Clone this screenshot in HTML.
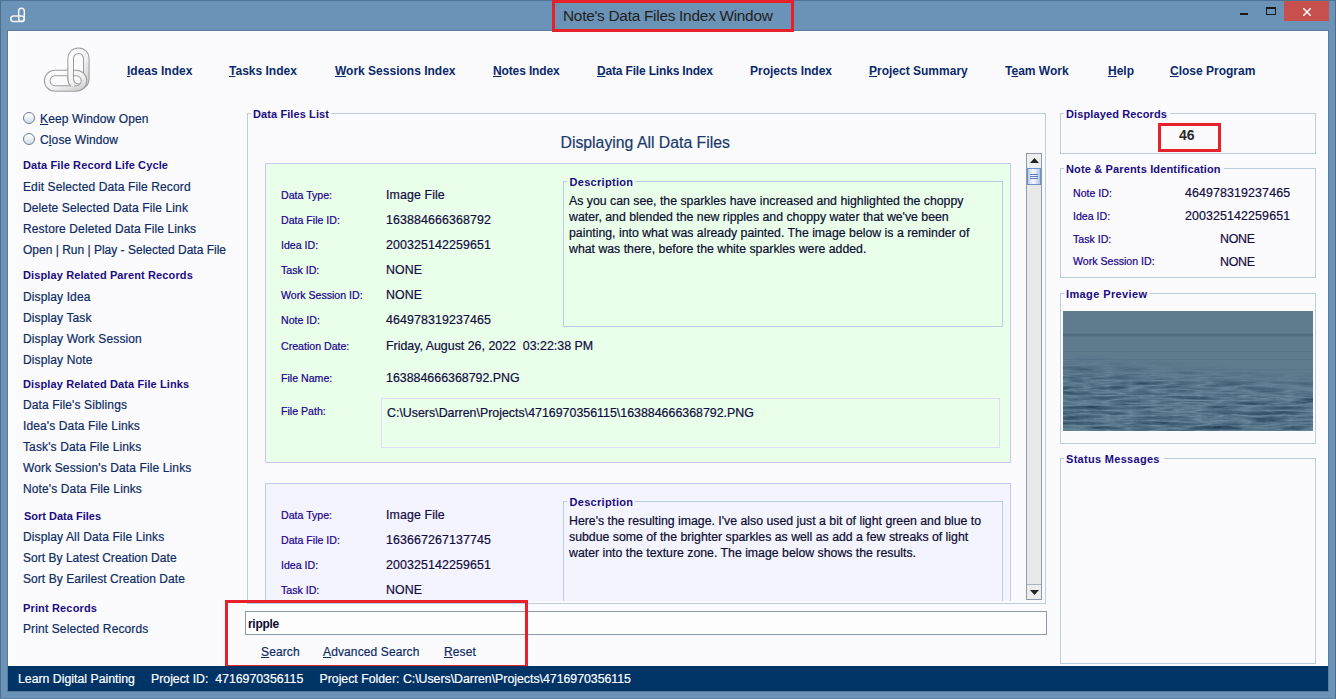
<!DOCTYPE html>
<html><head><meta charset="utf-8"><style>
html,body{margin:0;padding:0;width:1336px;height:699px;overflow:hidden;background:#6b93b8}
body{position:relative;font-family:"Liberation Sans",sans-serif}
.t{position:absolute;white-space:pre;font-family:"Liberation Sans",sans-serif}
.l{letter-spacing:0.12px}
.t{-webkit-text-stroke:0.2px currentColor}
u{text-decoration:underline;text-underline-offset:1px}
</style></head><body>
<div style="position:absolute;left:0px;top:0px;width:1336px;height:699px;background:#6b93b8"></div>
<div style="position:absolute;left:0px;top:0px;width:1336px;height:1px;background:#4e7394"></div>
<div style="position:absolute;left:0px;top:0px;width:1px;height:699px;background:#4f6f8d"></div>
<div style="position:absolute;left:1335px;top:0px;width:1px;height:699px;background:#4d6c89"></div>
<div style="position:absolute;left:0px;top:698px;width:1336px;height:1px;background:#5b81a3"></div>
<div style="position:absolute;left:7px;top:30px;width:1322px;height:662px;background:#587b9b"></div>
<div style="position:absolute;left:8px;top:31px;width:1320px;height:660px;background:#fbfbfd;border:1px solid #fff;box-sizing:border-box"></div>
<div class="t " style="left:563px;top:7.96px;font-size:15.4px;line-height:15.4px;font-weight:400;color:#221f1a;-webkit-text-stroke:0;letter-spacing:-0.27px">Note's Data Files Index Window</div>
<div style="position:absolute;left:552px;top:0px;width:242px;height:32px;border:3px solid #e8202a;box-sizing:border-box"></div>
<div style="position:absolute;left:1240px;top:13px;width:8px;height:2px;background:#1a1a1a"></div>
<div style="position:absolute;left:1266px;top:7px;width:10px;height:8px;border:1px solid #1a1a1a;border-top-width:2px;box-sizing:border-box"></div>
<div style="position:absolute;left:1284px;top:1px;width:45px;height:20px;background:#c7504e"></div>
<svg style="position:absolute;left:1303px;top:8px" width="8" height="8" viewBox="0 0 8 8"><path d="M0.3 0.3 L7.7 7.7 M7.7 0.3 L0.3 7.7" stroke="#fff" stroke-width="1.5"/></svg>
<svg style="position:absolute;left:9px;top:7px" width="18" height="16" viewBox="0 0 18 16"><rect x="9.7" y="1.2" width="5.6" height="13.4" rx="2.8" fill="none" stroke="#f4f4f4" stroke-width="1.5"/><rect x="1.8" y="9" width="13.5" height="5.6" rx="2.8" fill="none" stroke="#f4f4f4" stroke-width="1.5"/></svg>
<svg style="position:absolute;left:40px;top:44px" width="52" height="52" viewBox="0 0 52 52">
<defs><linearGradient id="lg" x1="0" y1="0" x2="1" y2="1"><stop offset="0" stop-color="#ffffff"/><stop offset="0.6" stop-color="#f0f0f0"/><stop offset="1" stop-color="#cfcfcf"/></linearGradient>
<clipPath id="cf"><rect x="25" y="24" width="9.5" height="18"/></clipPath></defs>
<g id="vl"><rect x="30.7" y="6.7" width="15.6" height="36" rx="7.8" fill="none" stroke="#9c9c9c" stroke-width="6.6"/>
<rect x="30.7" y="6.7" width="15.6" height="36" rx="7.8" fill="none" stroke="url(#lg)" stroke-width="4.6"/></g>
<rect x="7.2" y="29" width="36.8" height="15.5" rx="7.75" fill="none" stroke="#9c9c9c" stroke-width="6.6"/>
<rect x="7.2" y="29" width="36.8" height="15.5" rx="7.75" fill="none" stroke="url(#lg)" stroke-width="4.6"/>
<g clip-path="url(#cf)"><rect x="30.7" y="6.7" width="15.6" height="36" rx="7.8" fill="none" stroke="#9c9c9c" stroke-width="6.6"/>
<rect x="30.7" y="6.7" width="15.6" height="36" rx="7.8" fill="none" stroke="url(#lg)" stroke-width="4.6"/></g>
</svg>
<div class="t " style="left:127px;top:64.84px;font-size:12px;line-height:12px;font-weight:700;color:#0a2a6a;-webkit-text-stroke:0;"><u>I</u>deas Index</div>
<div class="t " style="left:229px;top:64.84px;font-size:12px;line-height:12px;font-weight:700;color:#0a2a6a;-webkit-text-stroke:0;"><u>T</u>asks Index</div>
<div class="t " style="left:335px;top:64.84px;font-size:12px;line-height:12px;font-weight:700;color:#0a2a6a;-webkit-text-stroke:0;"><u>W</u>ork Sessions Index</div>
<div class="t " style="left:493px;top:64.84px;font-size:12px;line-height:12px;font-weight:700;color:#0a2a6a;-webkit-text-stroke:0;letter-spacing:-0.13px"><u>N</u>otes Index</div>
<div class="t " style="left:597px;top:64.84px;font-size:12px;line-height:12px;font-weight:700;color:#0a2a6a;-webkit-text-stroke:0;letter-spacing:-0.17px"><u>D</u>ata File Links Index</div>
<div class="t " style="left:750px;top:64.84px;font-size:12px;line-height:12px;font-weight:700;color:#0a2a6a;-webkit-text-stroke:0;">Projects Index</div>
<div class="t " style="left:869px;top:64.84px;font-size:12px;line-height:12px;font-weight:700;color:#0a2a6a;-webkit-text-stroke:0;"><u>P</u>roject Summary</div>

<div class="t " style="left:1005px;top:64.84px;font-size:12px;line-height:12px;font-weight:700;color:#0a2a6a;-webkit-text-stroke:0;">T<u>e</u>am Work</div>
<div class="t " style="left:1108px;top:64.84px;font-size:12px;line-height:12px;font-weight:700;color:#0a2a6a;-webkit-text-stroke:0;"><u>H</u>elp</div>
<div class="t " style="left:1170px;top:64.84px;font-size:12px;line-height:12px;font-weight:700;color:#0a2a6a;-webkit-text-stroke:0;"><u>C</u>lose Program</div>
<div style="position:absolute;left:23px;top:112px;width:12px;height:12px;border-radius:50%;border:1px solid #6e7d8b;box-sizing:border-box;background:linear-gradient(#fbfcfd 20%,#e6edf4 55%,#cfdcea)"></div>
<div style="position:absolute;left:23px;top:133px;width:12px;height:12px;border-radius:50%;border:1px solid #6e7d8b;box-sizing:border-box;background:linear-gradient(#fbfcfd 20%,#e6edf4 55%,#cfdcea)"></div>
<div class="t l" style="left:40px;top:112.84px;font-size:12px;line-height:12px;font-weight:400;color:#0d2b63;"><u>K</u>eep Window Open</div>
<div class="t l" style="left:40px;top:134.34px;font-size:12px;line-height:12px;font-weight:400;color:#0d2b63;">C<u>l</u>ose Window</div>
<div class="t " style="left:23px;top:159.69px;font-size:11px;line-height:11px;font-weight:700;color:#1a0c82;-webkit-text-stroke:0;letter-spacing:0.12px">Data File Record Life Cycle</div>
<div class="t l" style="left:23px;top:180.84px;font-size:12px;line-height:12px;font-weight:400;color:#0d2b63;">Edit Selected Data File Record</div>
<div class="t l" style="left:23px;top:201.84px;font-size:12px;line-height:12px;font-weight:400;color:#0d2b63;">Delete Selected Data File Link</div>
<div class="t l" style="left:23px;top:222.84px;font-size:12px;line-height:12px;font-weight:400;color:#0d2b63;">Restore Deleted Data File Links</div>
<div class="t " style="left:23px;top:243.84px;font-size:12px;line-height:12px;font-weight:400;color:#0d2b63;">Open | Run | Play - Selected Data File</div>
<div class="t " style="left:23px;top:269.69px;font-size:11px;line-height:11px;font-weight:700;color:#1a0c82;-webkit-text-stroke:0;letter-spacing:0.12px">Display Related Parent Records</div>
<div class="t l" style="left:23px;top:290.84px;font-size:12px;line-height:12px;font-weight:400;color:#0d2b63;">Display Idea</div>
<div class="t l" style="left:23px;top:311.84px;font-size:12px;line-height:12px;font-weight:400;color:#0d2b63;">Display Task</div>
<div class="t l" style="left:23px;top:332.84px;font-size:12px;line-height:12px;font-weight:400;color:#0d2b63;">Display Work Session</div>
<div class="t l" style="left:23px;top:353.84px;font-size:12px;line-height:12px;font-weight:400;color:#0d2b63;">Display Note</div>
<div class="t " style="left:23px;top:378.69px;font-size:11px;line-height:11px;font-weight:700;color:#1a0c82;-webkit-text-stroke:0;letter-spacing:0.12px">Display Related Data File Links</div>
<div class="t l" style="left:23px;top:398.84px;font-size:12px;line-height:12px;font-weight:400;color:#0d2b63;">Data File's Siblings</div>
<div class="t l" style="left:23px;top:419.84px;font-size:12px;line-height:12px;font-weight:400;color:#0d2b63;">Idea's Data File Links</div>
<div class="t l" style="left:23px;top:440.84px;font-size:12px;line-height:12px;font-weight:400;color:#0d2b63;">Task's Data File Links</div>
<div class="t l" style="left:23px;top:461.84px;font-size:12px;line-height:12px;font-weight:400;color:#0d2b63;">Work Session's Data File Links</div>
<div class="t l" style="left:23px;top:482.84px;font-size:12px;line-height:12px;font-weight:400;color:#0d2b63;">Note's Data File Links</div>
<div class="t " style="left:24px;top:510.69px;font-size:11px;line-height:11px;font-weight:700;color:#1a0c82;-webkit-text-stroke:0;">Sort Data Files</div>
<div class="t " style="left:23px;top:530.84px;font-size:12px;line-height:12px;font-weight:400;color:#0d2b63;letter-spacing:0.12px">Display All Data File Links</div>
<div class="t " style="left:23px;top:551.84px;font-size:12px;line-height:12px;font-weight:400;color:#0d2b63;letter-spacing:0.03px">Sort By Latest Creation Date</div>
<div class="t " style="left:23px;top:572.84px;font-size:12px;line-height:12px;font-weight:400;color:#0d2b63;letter-spacing:0.06px">Sort By Earilest Creation Date</div>
<div class="t " style="left:23px;top:602.69px;font-size:11px;line-height:11px;font-weight:700;color:#1a0c82;-webkit-text-stroke:0;letter-spacing:0.15px">Print Records</div>
<div class="t l" style="left:23px;top:623.34px;font-size:12px;line-height:12px;font-weight:400;color:#0d2b63;">Print Selected Records</div>
<div style="position:absolute;left:247px;top:113px;width:799px;height:491px;border:1px solid #b9cde3;box-sizing:border-box"></div>
<div style="position:absolute;left:251px;top:106px;width:80px;height:12px;background:#fbfbfd"></div>
<div class="t " style="left:253px;top:108.69px;font-size:11px;line-height:11px;font-weight:700;color:#1a0c82;-webkit-text-stroke:0;letter-spacing:0.1px">Data Files List</div>
<div class="t " style="left:560.5px;top:135.22px;font-size:15.8px;line-height:15.8px;font-weight:400;color:#183a6c;">Displaying All Data Files</div>
<div style="position:absolute;left:248px;top:154px;width:777px;height:447px;overflow:hidden">
<div style="position:absolute;left:17px;top:9px;width:746px;height:300px;background:#eaffea;border:1px solid #c6c6f4;box-sizing:border-box"></div>
<div class="t " style="left:33px;top:35.52px;font-size:10.6px;line-height:10.6px;font-weight:400;color:#18008a;">Data Type:</div>
<div class="t " style="left:138px;top:35.00px;font-size:12.4px;line-height:12.4px;font-weight:400;color:#120c40;letter-spacing:0.1px">Image File</div>
<div class="t " style="left:33px;top:60.52px;font-size:10.6px;line-height:10.6px;font-weight:400;color:#18008a;">Data File ID:</div>
<div class="t " style="left:138px;top:60.00px;font-size:12.4px;line-height:12.4px;font-weight:400;color:#120c40;letter-spacing:0.1px">163884666368792</div>
<div class="t " style="left:33px;top:85.52px;font-size:10.6px;line-height:10.6px;font-weight:400;color:#18008a;">Idea ID:</div>
<div class="t " style="left:138px;top:85.00px;font-size:12.4px;line-height:12.4px;font-weight:400;color:#120c40;letter-spacing:0.1px">200325142259651</div>
<div class="t " style="left:33px;top:110.52px;font-size:10.6px;line-height:10.6px;font-weight:400;color:#18008a;">Task ID:</div>
<div class="t " style="left:138px;top:110.00px;font-size:12.4px;line-height:12.4px;font-weight:400;color:#120c40;letter-spacing:0.1px">NONE</div>
<div class="t " style="left:33px;top:135.52px;font-size:10.6px;line-height:10.6px;font-weight:400;color:#18008a;">Work Session ID:</div>
<div class="t " style="left:138px;top:135.00px;font-size:12.4px;line-height:12.4px;font-weight:400;color:#120c40;letter-spacing:0.1px">NONE</div>
<div class="t " style="left:33px;top:160.52px;font-size:10.6px;line-height:10.6px;font-weight:400;color:#18008a;">Note ID:</div>
<div class="t " style="left:138px;top:160.00px;font-size:12.4px;line-height:12.4px;font-weight:400;color:#120c40;letter-spacing:0.1px">464978319237465</div>
<div style="position:absolute;left:315px;top:27px;width:440px;height:146px;border:1px solid #b9cde3;box-sizing:border-box"></div>
<div style="position:absolute;left:319px;top:21px;width:68px;height:12px;background:#eaffea"></div>
<div class="t " style="left:321.5px;top:22.69px;font-size:11px;line-height:11px;font-weight:700;color:#1a0c82;-webkit-text-stroke:0;letter-spacing:0.3px">Description</div>
<div class="t " style="left:321px;top:41.09px;font-size:12.3px;line-height:12.3px;font-weight:400;color:#0c0c30;">As you can see, the sparkles have increased and highlighted the choppy</div>
<div class="t " style="left:321px;top:57.09px;font-size:12.3px;line-height:12.3px;font-weight:400;color:#0c0c30;">water, and blended the new ripples and choppy water that we've been</div>
<div class="t " style="left:321px;top:73.09px;font-size:12.3px;line-height:12.3px;font-weight:400;color:#0c0c30;">painting, into what was already painted. The image below is a reminder of</div>
<div class="t " style="left:321px;top:89.09px;font-size:12.3px;line-height:12.3px;font-weight:400;color:#0c0c30;">what was there, before the white sparkles were added.</div>
<div class="t " style="left:33px;top:187.02px;font-size:10.6px;line-height:10.6px;font-weight:400;color:#18008a;">Creation Date:</div>
<div class="t " style="left:138px;top:186.00px;font-size:12.4px;line-height:12.4px;font-weight:400;color:#120c40;">Friday, August 26, 2022 &nbsp;03:22:38 PM</div>
<div class="t " style="left:33px;top:218.72px;font-size:10.6px;line-height:10.6px;font-weight:400;color:#18008a;">File Name:</div>
<div class="t " style="left:138px;top:218.20px;font-size:12.4px;line-height:12.4px;font-weight:400;color:#120c40;">163884666368792.PNG</div>
<div class="t " style="left:33px;top:252.32px;font-size:10.6px;line-height:10.6px;font-weight:400;color:#18008a;">File Path:</div>
<div style="position:absolute;left:133px;top:244px;width:619px;height:50px;border:1px solid #dedcf8;box-sizing:border-box"></div>
<div class="t " style="left:139px;top:253.00px;font-size:12.4px;line-height:12.4px;font-weight:400;color:#120c40;">C:\Users\Darren\Projects\4716970356115\163884666368792.PNG</div>
<div style="position:absolute;left:17px;top:329px;width:746px;height:300px;background:#f4f4fe;border:1px solid #c6c6f4;box-sizing:border-box"></div>
<div class="t " style="left:33px;top:355.52px;font-size:10.6px;line-height:10.6px;font-weight:400;color:#18008a;">Data Type:</div>
<div class="t " style="left:138px;top:355.00px;font-size:12.4px;line-height:12.4px;font-weight:400;color:#120c40;letter-spacing:0.1px">Image File</div>
<div class="t " style="left:33px;top:380.52px;font-size:10.6px;line-height:10.6px;font-weight:400;color:#18008a;">Data File ID:</div>
<div class="t " style="left:138px;top:380.00px;font-size:12.4px;line-height:12.4px;font-weight:400;color:#120c40;letter-spacing:0.1px">163667267137745</div>
<div class="t " style="left:33px;top:405.52px;font-size:10.6px;line-height:10.6px;font-weight:400;color:#18008a;">Idea ID:</div>
<div class="t " style="left:138px;top:405.00px;font-size:12.4px;line-height:12.4px;font-weight:400;color:#120c40;letter-spacing:0.1px">200325142259651</div>
<div class="t " style="left:33px;top:430.52px;font-size:10.6px;line-height:10.6px;font-weight:400;color:#18008a;">Task ID:</div>
<div class="t " style="left:138px;top:430.00px;font-size:12.4px;line-height:12.4px;font-weight:400;color:#120c40;letter-spacing:0.1px">NONE</div>
<div class="t " style="left:33px;top:455.52px;font-size:10.6px;line-height:10.6px;font-weight:400;color:#18008a;">Work Session ID:</div>
<div class="t " style="left:138px;top:455.00px;font-size:12.4px;line-height:12.4px;font-weight:400;color:#120c40;letter-spacing:0.1px">NONE</div>
<div class="t " style="left:33px;top:480.52px;font-size:10.6px;line-height:10.6px;font-weight:400;color:#18008a;">Note ID:</div>
<div class="t " style="left:138px;top:480.00px;font-size:12.4px;line-height:12.4px;font-weight:400;color:#120c40;letter-spacing:0.1px">464978319237465</div>
<div style="position:absolute;left:315px;top:347px;width:440px;height:146px;border:1px solid #b9cde3;box-sizing:border-box"></div>
<div style="position:absolute;left:319px;top:341px;width:68px;height:12px;background:#f4f4fe"></div>
<div class="t " style="left:321.5px;top:342.69px;font-size:11px;line-height:11px;font-weight:700;color:#1a0c82;-webkit-text-stroke:0;letter-spacing:0.3px">Description</div>
<div class="t " style="left:321px;top:361.09px;font-size:12.3px;line-height:12.3px;font-weight:400;color:#0c0c30;">Here's the resulting image. I've also used just a bit of light green and blue to</div>
<div class="t " style="left:321px;top:377.09px;font-size:12.3px;line-height:12.3px;font-weight:400;color:#0c0c30;">subdue some of the brighter sparkles as well as add a few streaks of light</div>
<div class="t " style="left:321px;top:393.09px;font-size:12.3px;line-height:12.3px;font-weight:400;color:#0c0c30;">water into the texture zone. The image below shows the results.</div>
</div>
<div style="position:absolute;left:1026px;top:153px;width:16px;height:447px;background:#e9e9e9;border:1px solid #8c9cae;box-sizing:border-box"></div>
<div style="position:absolute;left:1027px;top:154px;width:14px;height:14px;background:#ededed"></div>
<svg style="position:absolute;left:1030px;top:158px" width="9" height="5"><path d="M0 5 L4.5 0 L9 5 Z" fill="#222"/></svg>
<div style="position:absolute;left:1027px;top:168px;width:14px;height:17px;border:1px solid #6d8fc8;box-sizing:border-box;background:linear-gradient(90deg,#b9cdee,#f4f8fe 40%,#e6eefa 60%,#a9c0e6)"></div>
<div style="position:absolute;left:1030px;top:174px;width:8px;height:1px;background:#5a7fc0"></div>
<div style="position:absolute;left:1030px;top:176px;width:8px;height:1px;background:#5a7fc0"></div>
<div style="position:absolute;left:1030px;top:178px;width:8px;height:1px;background:#5a7fc0"></div>
<div style="position:absolute;left:1027px;top:584px;width:14px;height:1px;background:#a9b3bd"></div>
<div style="position:absolute;left:1027px;top:585px;width:14px;height:14px;background:#ededed"></div>
<svg style="position:absolute;left:1030px;top:590px" width="9" height="5"><path d="M0 0 L4.5 5 L9 0 Z" fill="#222"/></svg>
<div style="position:absolute;left:245px;top:611px;width:802px;height:24px;background:#fdfdfe;border:1px solid #8d9aa6;box-sizing:border-box"></div>
<div class="t " style="left:248px;top:617.84px;font-size:12px;line-height:12px;font-weight:700;color:#0d0a2e;-webkit-text-stroke:0;letter-spacing:-0.3px">ripple</div>
<div class="t l" style="left:261px;top:645.84px;font-size:12px;line-height:12px;font-weight:400;color:#0d2b63;"><u>S</u>earch</div>
<div class="t l" style="left:323px;top:645.84px;font-size:12px;line-height:12px;font-weight:400;color:#0d2b63;"><u>A</u>dvanced Search</div>
<div class="t l" style="left:444px;top:645.84px;font-size:12px;line-height:12px;font-weight:400;color:#0d2b63;"><u>R</u>eset</div>
<div style="position:absolute;left:225px;top:600px;width:303px;height:68px;border:3px solid #e8202a;box-sizing:border-box"></div>
<div style="position:absolute;left:1060px;top:113px;width:256px;height:41px;border:1px solid #b9cde3;box-sizing:border-box"></div>
<div style="position:absolute;left:1064px;top:107px;width:106px;height:12px;background:#fbfbfd"></div>
<div class="t " style="left:1066px;top:108.69px;font-size:11px;line-height:11px;font-weight:700;color:#1a0c82;-webkit-text-stroke:0;letter-spacing:0.12px">Displayed Records</div>
<div style="position:absolute;left:1158px;top:123px;width:63px;height:29px;border:3px solid #e8202a;box-sizing:border-box"></div>
<div class="t " style="left:1179px;top:128.15px;font-size:14px;line-height:14px;font-weight:700;color:#2a2a2a;-webkit-text-stroke:0;">46</div>
<div style="position:absolute;left:1060px;top:168px;width:256px;height:110px;border:1px solid #b9cde3;box-sizing:border-box"></div>
<div style="position:absolute;left:1064px;top:162px;width:160px;height:12px;background:#fbfbfd"></div>
<div class="t " style="left:1066px;top:163.69px;font-size:11px;line-height:11px;font-weight:700;color:#1a0c82;-webkit-text-stroke:0;letter-spacing:0.15px">Note &amp; Parents Identification</div>
<div class="t " style="left:1073px;top:187.72px;font-size:10.6px;line-height:10.6px;font-weight:400;color:#18008a;">Note ID:</div>
<div class="t " style="left:1185px;top:187.20px;font-size:12.4px;line-height:12.4px;font-weight:400;color:#120c40;letter-spacing:0.12px">464978319237465</div>
<div class="t " style="left:1073px;top:210.62px;font-size:10.6px;line-height:10.6px;font-weight:400;color:#18008a;">Idea ID:</div>
<div class="t " style="left:1185px;top:210.10px;font-size:12.4px;line-height:12.4px;font-weight:400;color:#120c40;letter-spacing:0.12px">200325142259651</div>
<div class="t " style="left:1073px;top:233.52px;font-size:10.6px;line-height:10.6px;font-weight:400;color:#18008a;">Task ID:</div>
<div class="t " style="left:1220px;top:233.00px;font-size:12.4px;line-height:12.4px;font-weight:400;color:#120c40;letter-spacing:-0.3px">NONE</div>
<div class="t " style="left:1073px;top:256.42px;font-size:10.6px;line-height:10.6px;font-weight:400;color:#18008a;">Work Session ID:</div>
<div class="t " style="left:1220px;top:255.90px;font-size:12.4px;line-height:12.4px;font-weight:400;color:#120c40;letter-spacing:-0.3px">NONE</div>
<div style="position:absolute;left:1060px;top:293px;width:256px;height:151px;border:1px solid #b9cde3;box-sizing:border-box"></div>
<div style="position:absolute;left:1064px;top:287px;width:86px;height:12px;background:#fbfbfd"></div>
<div class="t " style="left:1066px;top:288.69px;font-size:11px;line-height:11px;font-weight:700;color:#1a0c82;-webkit-text-stroke:0;letter-spacing:0.39px">Image Preview</div>
<svg style="position:absolute;left:1063px;top:311px" width="250" height="120" viewBox="0 0 250 120">
<defs>
<filter id="wt" x="0" y="0" width="100%" height="100%" color-interpolation-filters="sRGB"><feTurbulence type="turbulence" baseFrequency="0.022 0.2" numOctaves="4" seed="11"/>
<feColorMatrix type="matrix" values="0 0 0 -0.36 0.43  0 0 0 -0.38 0.555  0 0 0 -0.34 0.625  0 0 0 0 1"/></filter>
<linearGradient id="wm" x1="0.15" y1="0" x2="0" y2="1"><stop offset="0" stop-color="#fff" stop-opacity="0"/><stop offset="0.36" stop-color="#fff" stop-opacity="0"/><stop offset="0.6" stop-color="#fff" stop-opacity="0.9"/><stop offset="1" stop-color="#fff" stop-opacity="1"/></linearGradient>
<mask id="wmask"><rect width="250" height="120" fill="url(#wm)"/></mask>
</defs>
<rect width="250" height="120" fill="#5f7b8e"/>
<rect y="22" width="250" height="1" fill="#5a7588"/><rect y="23" width="250" height="2" fill="#526c80"/><rect y="25" width="250" height="1" fill="#5a7589"/>
<rect y="40" width="250" height="1" fill="#58748a"/>
<rect y="48" width="250" height="1" fill="#58748a"/>
<rect y="58" width="250" height="1" fill="#5a768b"/>
<rect width="250" height="120" filter="url(#wt)" mask="url(#wmask)"/>
</svg>
<div style="position:absolute;left:1060px;top:458px;width:256px;height:206px;border:1px solid #b9cde3;box-sizing:border-box"></div>
<div style="position:absolute;left:1064px;top:452px;width:100px;height:12px;background:#fbfbfd"></div>
<div class="t " style="left:1066px;top:453.69px;font-size:11px;line-height:11px;font-weight:700;color:#1a0c82;-webkit-text-stroke:0;letter-spacing:0.3px">Status Messages</div>
<div style="position:absolute;left:8px;top:666px;width:1320px;height:25px;background:#003366"></div>
<div class="t " style="left:18px;top:672.59px;font-size:12.3px;line-height:12.3px;font-weight:400;color:#fff;">Learn Digital Painting</div>
<div class="t " style="left:151px;top:672.59px;font-size:12.3px;line-height:12.3px;font-weight:400;color:#fff;">Project ID: &nbsp;4716970356115</div>
<div class="t " style="left:319.5px;top:672.59px;font-size:12.3px;line-height:12.3px;font-weight:400;color:#fff;">Project Folder: C:\Users\Darren\Projects\4716970356115</div>
</body></html>
